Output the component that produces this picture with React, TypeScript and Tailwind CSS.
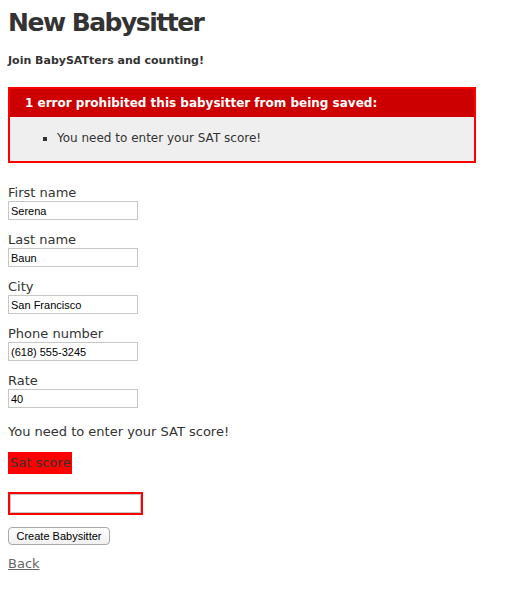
import React from 'react';

const VERDANA = 'font-["Verdana","DejaVu_Sans",sans-serif]';

interface FieldProps {
  label: string;
  value: string;
}

function Field({ label, value }: FieldProps) {
  return (
    <div className="mb-[12px]">
      <label className="block text-[13px] leading-[16px]">{label}</label>
      <input
        readOnly
        value={value}
        className='block w-[130px] h-[19px] border border-[#c6c6c6] bg-white px-[2px] text-[11px] text-black font-["Helvetica","Liberation_Sans",sans-serif] outline-none'
      />
    </div>
  );
}

export default function App() {
  const fields = [
    { label: 'First name', value: 'Serena' },
    { label: 'Last name', value: 'Baun' },
    { label: 'City', value: 'San Francisco' },
    { label: 'Phone number', value: '(618) 555-3245' },
    { label: 'Rate', value: '40' },
  ];

  return (
    <div className={`${VERDANA} bg-white text-[#333] px-[8px] pt-[3px] min-h-[589px]`}>
      <h1 className="text-[25px] leading-[40px] font-bold tracking-[-1.5px]">New Babysitter</h1>
      <p className="mt-[10px] text-[11px] leading-[16px] font-bold">Join BabySATters and counting!</p>

      {/* error box */}
      <div className="mt-[18px] w-[468px] border-2 border-[#f00] bg-[#efefef]">
        <h2 className="bg-[#c00] text-white text-[12px] leading-[18px] font-bold py-[5px] pl-[15px] pr-[5px]">
          1 error prohibited this babysitter from being saved:
        </h2>
        <ul className="list-[square] pl-[47px] pt-[12px] pb-[14px] text-[12px] leading-[18px]">
          <li>You need to enter your SAT score!</li>
        </ul>
      </div>

      <form className="mt-[22px]">
        {fields.map((f) => (
          <Field key={f.label} label={f.label} value={f.value} />
        ))}

        <p className="mt-[16px] text-[13px] leading-[16px]">You need to enter your SAT score!</p>

        <div className="mt-[12px] inline-block bg-[#f00] p-[2px]">
          <label className="block text-[13px] leading-[18px]">Sat score</label>
        </div>

        <div className="mt-[18px] w-fit bg-[#f00] p-[2px]">
          <input
            readOnly
            className="block w-[131px] h-[19px] border border-[#c6c6c6] bg-white outline-none"
          />
        </div>

        <button
          type="button"
          className='mt-[12px] block h-[18px] w-[102px] rounded-[4px] border border-[#a9a9a9] bg-gradient-to-b from-white to-[#f0f0f0] text-[11px] leading-[16px] text-black font-["Helvetica","Liberation_Sans",sans-serif]'
        >
          Create Babysitter
        </button>

        <a href="#" className="mt-[11px] inline-block text-[13px] leading-[16px] text-[#666] underline">
          Back
        </a>
      </form>
    </div>
  );
}
